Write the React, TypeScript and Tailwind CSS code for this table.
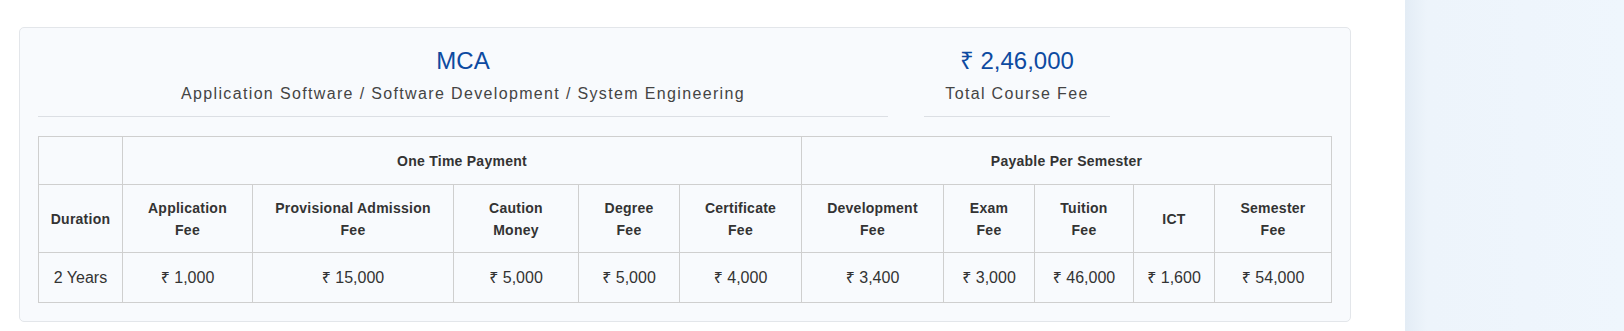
const font = "font-['Liberation_Sans','Noto_Sans',Arial,sans-serif]";

const oneTime = [
  { top: "Application", bottom: "Fee", value: "₹ 1,000" },
  { top: "Provisional Admission", bottom: "Fee", value: "₹ 15,000" },
  { top: "Caution", bottom: "Money", value: "₹ 5,000" },
  { top: "Degree", bottom: "Fee", value: "₹ 5,000" },
  { top: "Certificate", bottom: "Fee", value: "₹ 4,000" },
];

const perSemester = [
  { top: "Development", bottom: "Fee", value: "₹ 3,400" },
  { top: "Exam", bottom: "Fee", value: "₹ 3,000" },
  { top: "Tuition", bottom: "Fee", value: "₹ 46,000" },
  { top: "ICT", bottom: "", value: "₹ 1,600" },
  { top: "Semester", bottom: "Fee", value: "₹ 54,000" },
];

const colWidths = [84, 130, 201, 125, 101, 122, 142, 91, 99, 81, 117];

const cell = "border border-[#cfcfcf] text-center align-middle px-2";

export default function App() {
  const fees = [...oneTime, ...perSemester];

  return (
    <div className={`flex h-[331px] w-full bg-white ${font}`}>
      <div className="w-[1405px] shrink-0 pl-[19px] pt-[27px]">
        <div className="w-[1332px] rounded-[5px] border border-[#e3e6ea] bg-[#f8fafd] p-[18px]">
          {/* Course title and total */}
          <div className="flex gap-[36px]">
            <div className="w-[850px] border-b border-[#dcdfe4] pb-[10px] text-center">
              <h2 className="mb-[7px] text-[24px] leading-[29px] text-[#0d4aa1]">MCA</h2>
              <p className="text-[16px] leading-[24px] tracking-[1.35px] text-[#444]">
                Application Software / Software Development / System Engineering
              </p>
            </div>
            <div className="w-[186px] border-b border-[#dcdfe4] pb-[10px] text-center">
              <div className="mb-[7px] text-[24px] leading-[29px] text-[#0d4aa1]">₹ 2,46,000</div>
              <p className="text-[16px] leading-[24px] tracking-[1.35px] text-[#444]">Total Course Fee</p>
            </div>
          </div>

          {/* Fee table */}
          <table className="mt-[19px] w-[1293px] table-fixed border-collapse text-[#333]">
            <colgroup>
              {colWidths.map((w, i) => (
                <col key={i} style={{ width: w }} />
              ))}
            </colgroup>
            <thead>
              <tr className="h-[48px] text-[14px] font-bold leading-[22px] tracking-[0.25px]">
                <th className={cell}></th>
                <th colSpan={5} className={cell}>One Time Payment</th>
                <th colSpan={5} className={cell}>Payable Per Semester</th>
              </tr>
              <tr className="h-[68px] text-[14px] font-bold leading-[22px] tracking-[0.25px]">
                <th className={cell}>Duration</th>
                {fees.map((f) => (
                  <th key={f.top} className={cell}>
                    <span className="block">{f.top}</span>
                    {f.bottom && <span className="block">{f.bottom}</span>}
                  </th>
                ))}
              </tr>
            </thead>
            <tbody>
              <tr className="h-[50px] text-[16px] leading-[24px]">
                <td className={cell}>2 Years</td>
                {fees.map((f) => (
                  <td key={f.top} className={cell}>{f.value}</td>
                ))}
              </tr>
            </tbody>
          </table>
        </div>
      </div>

      {/* Side panel */}
      <div className="flex-1 bg-gradient-to-r from-[#e3ecf5] via-[#edf4fb] via-[10%] to-[#eff6fd]" />
    </div>
  );
}
